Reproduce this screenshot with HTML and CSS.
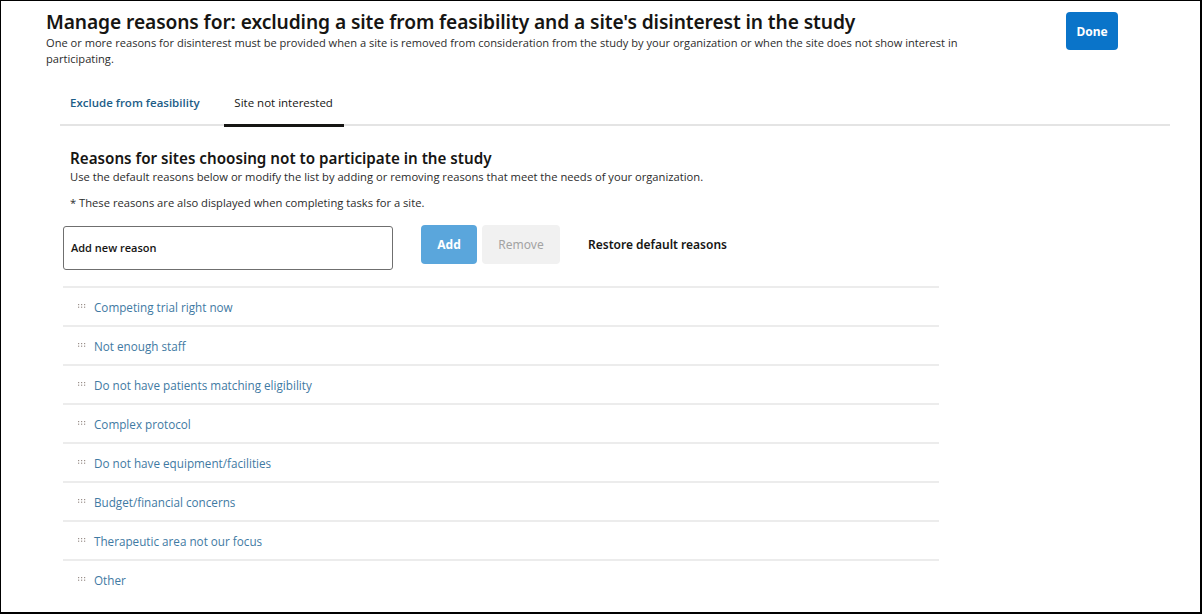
FILE: index.html
```html
<!DOCTYPE html>
<html>
<head>
<meta charset="utf-8">
<link rel="stylesheet" href="styles.css">
</head>
<body>
<div class="frame">
  <header class="top">
    <div class="top-text">
      <h1 class="title">Manage reasons for: excluding a site from feasibility and a site's disinterest in the study</h1>
      <p class="lead">One or more reasons for disinterest must be provided when a site is removed from consideration from the study by your organization or when the site does not show interest in participating.</p>
    </div>
    <button class="btn-done">Done</button>
  </header>

  <nav class="tabs">
    <div class="tab">Exclude from feasibility</div>
    <div class="tab tab-active">Site not interested</div>
  </nav>

  <section class="section">
    <h2 class="sec-title">Reasons for sites choosing not to participate in the study</h2>
    <p class="sec-desc">Use the default reasons below or modify the list by adding or removing reasons that meet the needs of your organization.</p>
    <p class="sec-note">* These reasons are also displayed when completing tasks for a site.</p>

    <div class="add-row">
      <div class="input">Add new reason</div>
      <button class="btn-add">Add</button>
      <button class="btn-remove">Remove</button>
      <button class="btn-restore">Restore default reasons</button>
    </div>

    <ul class="list">
      <li class="item"><svg class="handle" viewBox="0 0 8 4" width="8" height="4"><g fill="#9a8f8a"><rect x="0" y="0" width="1.2" height="1.2"/><rect x="3" y="0" width="1.2" height="1.2"/><rect x="6" y="0" width="1.2" height="1.2"/><rect x="0" y="2.6" width="1.2" height="1.2"/><rect x="3" y="2.6" width="1.2" height="1.2"/><rect x="6" y="2.6" width="1.2" height="1.2"/></g></svg>Competing trial right now</li>
      <li class="item"><svg class="handle" viewBox="0 0 8 4" width="8" height="4"><g fill="#9a8f8a"><rect x="0" y="0" width="1.2" height="1.2"/><rect x="3" y="0" width="1.2" height="1.2"/><rect x="6" y="0" width="1.2" height="1.2"/><rect x="0" y="2.6" width="1.2" height="1.2"/><rect x="3" y="2.6" width="1.2" height="1.2"/><rect x="6" y="2.6" width="1.2" height="1.2"/></g></svg>Not enough staff</li>
      <li class="item"><svg class="handle" viewBox="0 0 8 4" width="8" height="4"><g fill="#9a8f8a"><rect x="0" y="0" width="1.2" height="1.2"/><rect x="3" y="0" width="1.2" height="1.2"/><rect x="6" y="0" width="1.2" height="1.2"/><rect x="0" y="2.6" width="1.2" height="1.2"/><rect x="3" y="2.6" width="1.2" height="1.2"/><rect x="6" y="2.6" width="1.2" height="1.2"/></g></svg>Do not have patients matching eligibility</li>
      <li class="item"><svg class="handle" viewBox="0 0 8 4" width="8" height="4"><g fill="#9a8f8a"><rect x="0" y="0" width="1.2" height="1.2"/><rect x="3" y="0" width="1.2" height="1.2"/><rect x="6" y="0" width="1.2" height="1.2"/><rect x="0" y="2.6" width="1.2" height="1.2"/><rect x="3" y="2.6" width="1.2" height="1.2"/><rect x="6" y="2.6" width="1.2" height="1.2"/></g></svg>Complex protocol</li>
      <li class="item"><svg class="handle" viewBox="0 0 8 4" width="8" height="4"><g fill="#9a8f8a"><rect x="0" y="0" width="1.2" height="1.2"/><rect x="3" y="0" width="1.2" height="1.2"/><rect x="6" y="0" width="1.2" height="1.2"/><rect x="0" y="2.6" width="1.2" height="1.2"/><rect x="3" y="2.6" width="1.2" height="1.2"/><rect x="6" y="2.6" width="1.2" height="1.2"/></g></svg>Do not have equipment/facilities</li>
      <li class="item"><svg class="handle" viewBox="0 0 8 4" width="8" height="4"><g fill="#9a8f8a"><rect x="0" y="0" width="1.2" height="1.2"/><rect x="3" y="0" width="1.2" height="1.2"/><rect x="6" y="0" width="1.2" height="1.2"/><rect x="0" y="2.6" width="1.2" height="1.2"/><rect x="3" y="2.6" width="1.2" height="1.2"/><rect x="6" y="2.6" width="1.2" height="1.2"/></g></svg>Budget/financial concerns</li>
      <li class="item"><svg class="handle" viewBox="0 0 8 4" width="8" height="4"><g fill="#9a8f8a"><rect x="0" y="0" width="1.2" height="1.2"/><rect x="3" y="0" width="1.2" height="1.2"/><rect x="6" y="0" width="1.2" height="1.2"/><rect x="0" y="2.6" width="1.2" height="1.2"/><rect x="3" y="2.6" width="1.2" height="1.2"/><rect x="6" y="2.6" width="1.2" height="1.2"/></g></svg>Therapeutic area not our focus</li>
      <li class="item"><svg class="handle" viewBox="0 0 8 4" width="8" height="4"><g fill="#9a8f8a"><rect x="0" y="0" width="1.2" height="1.2"/><rect x="3" y="0" width="1.2" height="1.2"/><rect x="6" y="0" width="1.2" height="1.2"/><rect x="0" y="2.6" width="1.2" height="1.2"/><rect x="3" y="2.6" width="1.2" height="1.2"/><rect x="6" y="2.6" width="1.2" height="1.2"/></g></svg>Other</li>
    </ul>
  </section>
</div>
</body>
</html>
```

FILE: styles.css
```css
* { box-sizing: border-box; }
html, body { margin: 0; padding: 0; background: #fff; }
body {
  font-family: "Open Sans", "Noto Sans", sans-serif;
  color: #161513;
}
.frame {
  width: 1202px;
  height: 614px;
  border-style: solid;
  border-color: #000;
  border-width: 1px 2px 2px 1px;
  overflow: hidden;
  padding: 0 0 0 45px;
}
.top {
  display: flex;
  align-items: flex-start;
  padding-top: 7px;
}
.top-text { width: 950px; }
.title {
  margin: 0;
  font-family: "Noto Sans", sans-serif;
  font-size: 19.2px;
  font-weight: 600;
  line-height: 27px;
  color: #161513;
  letter-spacing: -0.1px;
}
.lead {
  margin: 0;
  font-size: 11.1px;
  line-height: 16px;
  color: #2b2b2b;
}
.btn-done {
  margin: 4px 0 0 70px;
  width: 52px;
  height: 38px;
  border: 0;
  border-radius: 4px;
  background: #0a74c9;
  color: #fff;
  font-family: "Noto Sans", sans-serif;
  font-weight: 700;
  font-size: 12px;
  padding: 0;
}
.tabs {
  display: flex;
  margin: 22px 30px 0 14px;
  border-bottom: 2px solid #e4e4e4;
  height: 37px;
}
.tab {
  padding: 0 10px;
  font-size: 11.5px;
  line-height: 28px;
  color: #161513;
}
.tab:first-child {
  color: #1d5d87;
  font-weight: 600;
  padding: 0 24px 0 10px;
}
.tab-active {
  border-bottom: 3px solid #161513;
  height: 38px;
  width: 120px;
  text-align: center;
}
.section { padding: 22px 0 0 24px; }
.sec-title {
  margin: 0;
  font-family: "Noto Sans", sans-serif;
  font-size: 15.2px;
  font-weight: 600;
  line-height: 20px;
}
.sec-desc, .sec-note {
  margin: 0;
  font-size: 11.2px;
  line-height: 16px;
  color: #2b2b2b;
}
.sec-desc { margin-top: 1px; }
.sec-note { margin-top: 10px; }
.add-row {
  display: flex;
  align-items: flex-start;
  margin: 14px 0 0 -7px;
}
.input {
  width: 330px;
  height: 44px;
  border: 1px solid #6f6f6f;
  border-radius: 3px;
  padding: 0 7px;
  font-size: 11px;
  font-weight: 600;
  line-height: 42px;
  color: #161513;
  margin-top: 1px;
}
.btn-add, .btn-remove, .btn-restore {
  height: 39px;
  border: 0;
  border-radius: 4px;
  font-family: "Noto Sans", sans-serif;
  font-size: 12px;
  padding: 0;
}
.btn-add {
  margin-left: 28px;
  width: 56px;
  background: #5aa6dc;
  color: #fff;
  font-weight: 700;
}
.btn-remove {
  margin-left: 5px;
  width: 78px;
  background: #f1f1f1;
  color: #a3a3a3;
}
.btn-restore {
  margin-left: 28px;
  background: transparent;
  color: #161513;
  font-weight: 600;
}
.list {
  list-style: none;
  margin: 16px 0 0 -7px;
  padding: 0;
  width: 876px;
}
.item {
  display: flex;
  align-items: center;
  height: 39px;
  border-top: 2px solid #ececec;
  padding-left: 15px;
  font-size: 11.7px;
  color: #3f7aa3;
}
.handle {
  flex: none;
  margin-right: 8px;
  margin-top: -2px;
}
```
